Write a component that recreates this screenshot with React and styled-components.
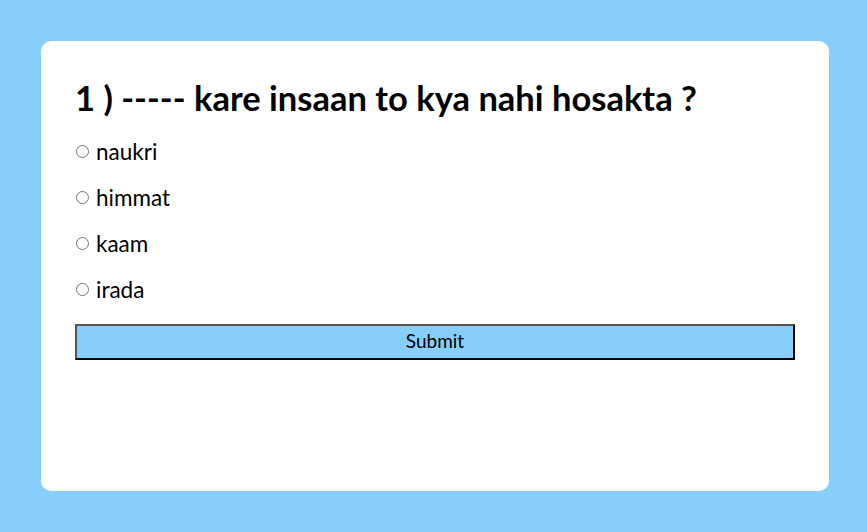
import React, { useState } from "react";
import styled, { createGlobalStyle } from "styled-components";

const Global = createGlobalStyle`
  html, body { margin: 0; padding: 0; background: #87cefa; }
  body { font-family: "Lato", "Noto Sans", sans-serif; }
`;

const Page = styled.div`
  padding: 41px;
`;

const Card = styled.div`
  background: #ffffff;
  border-radius: 10px;
  width: 788px;
  height: 450px;
  box-sizing: border-box;
  padding: 34px 34px;
  display: flex;
  flex-direction: column;
`;

const Title = styled.h2`
  margin: 0 0 16px;
  font-size: 34.5px;
  font-weight: 700;
  color: #000;
  line-height: 46px;
`;

const Options = styled.ul`
  list-style: none;
  margin: 0;
  padding: 0;
  display: flex;
  flex-direction: column;
  gap: 17px;
`;

const Option = styled.li`
  display: flex;
  align-items: center;
  height: 29px;
  font-size: 22.5px;
  color: #000;
`;

const Radio = styled.input`
  margin: 0 7px 0 1px;
  width: 13px;
  height: 13px;
`;

const Submit = styled.button`
  margin-top: 20px;
  width: 100%;
  height: 36px;
  background: #87cefa;
  border: 2px outset #000;
  font-family: inherit;
  font-size: 19px;
  line-height: 1;
  color: #000;
  padding: 0 0 3px;
`;

const answers = ["naukri", "himmat", "kaam", "irada"];

export default function App() {
  const [choice, setChoice] = useState(null);
  return (
    <>
      <Global />
      <Page>
        <Card>
          <Title>1 ) ----- kare insaan to kya nahi hosakta ?</Title>
          <Options>
            {answers.map((a) => (
              <Option key={a}>
                <Radio
                  type="radio"
                  name="q1"
                  id={a}
                  checked={choice === a}
                  onChange={() => setChoice(a)}
                />
                <label htmlFor={a}>{a}</label>
              </Option>
            ))}
          </Options>
          <Submit>Submit</Submit>
        </Card>
      </Page>
    </>
  );
}
